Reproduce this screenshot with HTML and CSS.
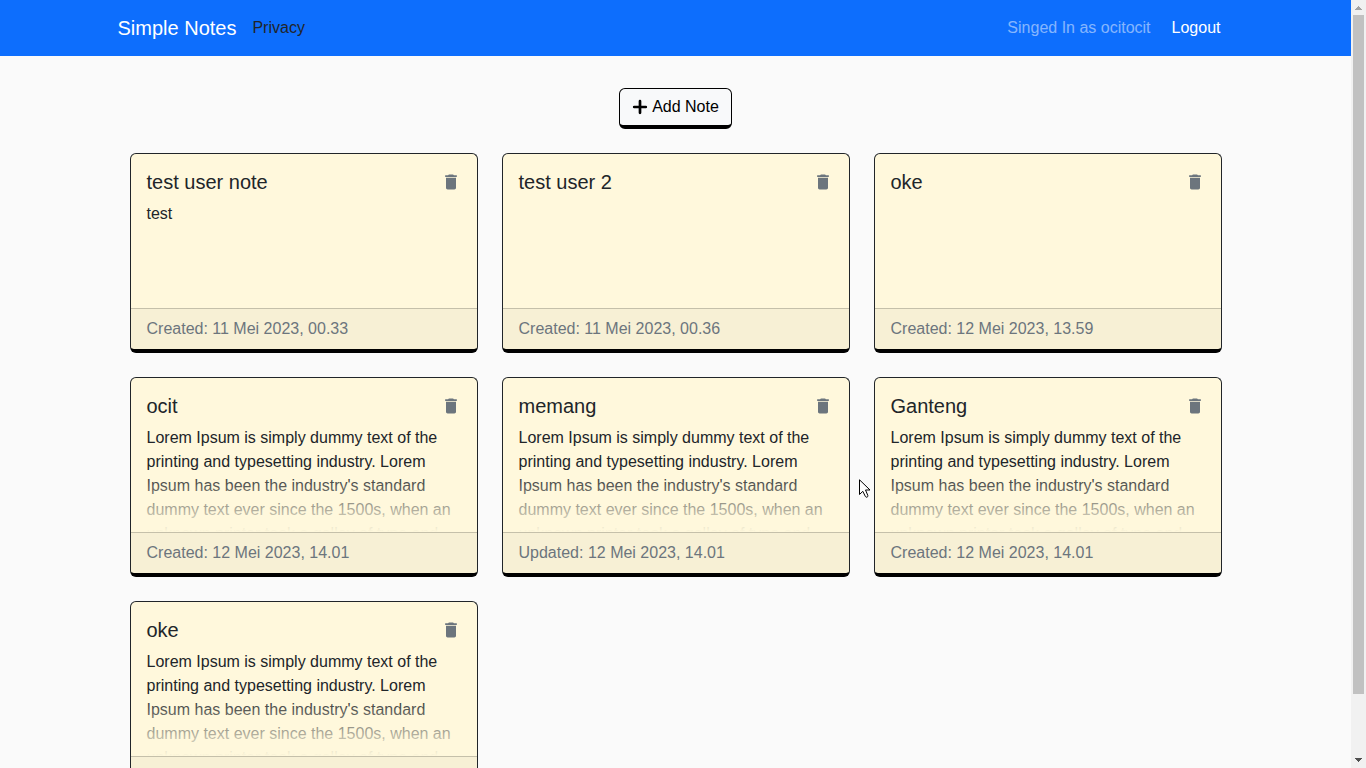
FILE: index.html
```html
<!DOCTYPE html>
<html lang="en">
<head>
<meta charset="utf-8">
<meta name="viewport" content="width=device-width, initial-scale=1">
<title>Simple Notes</title>
<link rel="stylesheet" href="styles.css">
</head>
<body>
<svg class="sprite" aria-hidden="true">
  <symbol id="trash" viewBox="0 0 24 24"><path d="M6 19c0 1.1.9 2 2 2h8c1.1 0 2-.9 2-2V7H6v12zM19 4h-3.500l-1-1h-5l-1 1H5v2h14V4z"/></symbol>
</svg>
<div class="page">
  <header class="navbar">
    <nav class="container navbar-inner">
      <a class="brand" href="#">Simple Notes</a>
      <a class="nav-link" href="#">Privacy</a>
      <span class="user">Singed In as ocitocit</span>
      <button class="logout" type="button">Logout</button>
    </nav>
  </header>
  <main class="container content">
    <button class="add-note" type="button">
      <svg class="plus" viewBox="0 0 16 16" aria-hidden="true"><path d="M8 2.200v11.600M2.200 8h11.600" stroke="currentColor" stroke-width="2.700" stroke-linecap="round"/></svg>
      Add Note
    </button>
    <div class="notes">
      <article class="note">
        <div class="note-body">
          <div class="note-head"><h5 class="note-title">test user note</h5><button class="delete" type="button" aria-label="Delete note"><svg class="icon"><use href="#trash"/></svg></button></div>
          <p class="note-text">test</p>
        </div>
        <footer class="note-footer">Created: 11 Mei 2023, 00.33</footer>
      </article>
      <article class="note">
        <div class="note-body">
          <div class="note-head"><h5 class="note-title">test user 2</h5><button class="delete" type="button" aria-label="Delete note"><svg class="icon"><use href="#trash"/></svg></button></div>
        </div>
        <footer class="note-footer">Created: 11 Mei 2023, 00.36</footer>
      </article>
      <article class="note">
        <div class="note-body">
          <div class="note-head"><h5 class="note-title">oke</h5><button class="delete" type="button" aria-label="Delete note"><svg class="icon"><use href="#trash"/></svg></button></div>
        </div>
        <footer class="note-footer">Created: 12 Mei 2023, 13.59</footer>
      </article>
      <article class="note">
        <div class="note-body">
          <div class="note-head"><h5 class="note-title">ocit</h5><button class="delete" type="button" aria-label="Delete note"><svg class="icon"><use href="#trash"/></svg></button></div>
          <p class="note-text">Lorem Ipsum is simply dummy text of the printing and typesetting industry. Lorem Ipsum has been the industry's standard dummy text ever since the 1500s, when an unknown printer took a galley of type and</p>
        </div>
        <footer class="note-footer">Created: 12 Mei 2023, 14.01</footer>
      </article>
      <article class="note">
        <div class="note-body">
          <div class="note-head"><h5 class="note-title">memang</h5><button class="delete" type="button" aria-label="Delete note"><svg class="icon"><use href="#trash"/></svg></button></div>
          <p class="note-text">Lorem Ipsum is simply dummy text of the printing and typesetting industry. Lorem Ipsum has been the industry's standard dummy text ever since the 1500s, when an unknown printer took a galley of type and</p>
        </div>
        <footer class="note-footer">Updated: 12 Mei 2023, 14.01</footer>
      </article>
      <article class="note">
        <div class="note-body">
          <div class="note-head"><h5 class="note-title">Ganteng</h5><button class="delete" type="button" aria-label="Delete note"><svg class="icon"><use href="#trash"/></svg></button></div>
          <p class="note-text">Lorem Ipsum is simply dummy text of the printing and typesetting industry. Lorem Ipsum has been the industry's standard dummy text ever since the 1500s, when an unknown printer took a galley of type and</p>
        </div>
        <footer class="note-footer">Created: 12 Mei 2023, 14.01</footer>
      </article>
      <article class="note">
        <div class="note-body">
          <div class="note-head"><h5 class="note-title">oke</h5><button class="delete" type="button" aria-label="Delete note"><svg class="icon"><use href="#trash"/></svg></button></div>
          <p class="note-text">Lorem Ipsum is simply dummy text of the printing and typesetting industry. Lorem Ipsum has been the industry's standard dummy text ever since the 1500s, when an unknown printer took a galley of type and</p>
        </div>
        <footer class="note-footer"></footer>
      </article>
    </div>
  </main>
</div>
<div class="scrollbar" aria-hidden="true">
  <svg class="arrow arrow-up" viewBox="0 0 15 15" shape-rendering="crispEdges"><path d="M7 6h1v1h1v1h1v1h1v1H4V9h1V8h1V7h1z"/></svg>
  <div class="track"><div class="thumb"></div></div>
  <svg class="arrow arrow-down" viewBox="0 0 15 15" shape-rendering="crispEdges"><path d="M4 5h7v1h-1v1H9v1H8v1H7V8H6V7H5V6H4z"/></svg>
</div>
<svg class="cursor" viewBox="0 0 12 20" aria-hidden="true"><path d="M.5.800v14.700l3.300-3.200 2.600 5.200q.6 1.100 1.700.6t.7-1.700L6.500 11H11z" fill="#fff" stroke="#000"/></svg>
</body>
</html>
```
FILE: styles.css
```css
*, *::before, *::after { box-sizing: border-box; }

body {
  margin: 0;
  display: flex;
  height: 100vh;
  overflow: hidden;
  background: #fafafa;
  color: #212529;
  font: 16px/24px "Liberation Sans", Arial, sans-serif;
}

button {
  font: inherit;
  cursor: pointer;
}

a { text-decoration: none; }

.sprite {
  position: absolute;
  width: 0;
  height: 0;
}

.page {
  flex: 1;
  min-width: 0;
  overflow: hidden;
}

.container {
  width: 100%;
  max-width: 1140px;
  margin: 0 auto;
  padding: 0 12px;
}

.navbar { background: #0d6efd; }

.navbar-inner {
  display: flex;
  align-items: center;
  gap: 16px;
  min-height: 56px;
}

.brand {
  color: #fff;
  font-size: 20px;
}

.nav-link { color: #212529; }

.user {
  margin-left: auto;
  color: rgba(255, 255, 255, 0.5);
}

.logout {
  padding: 6px 12px 6px 4px;
  border: 1px solid transparent;
  background: none;
  color: #fff;
}

.content {
  display: flex;
  flex-direction: column;
  align-items: center;
  gap: 24px;
  padding: 32px 24px 24px;
}

.add-note {
  display: flex;
  align-items: center;
  gap: 4px;
  padding: 6px 12px;
  border: 1px solid #000;
  border-bottom-width: 4px;
  border-radius: 6px;
  background: #f8f9fa;
  color: #000;
}

.plus {
  width: 16px;
  height: 16px;
}

.notes {
  display: grid;
  grid-template-columns: repeat(3, 1fr);
  gap: 24px;
  width: 100%;
}

.note {
  display: flex;
  flex-direction: column;
  height: 200px;
  overflow: hidden;
  border: 1px solid #212529;
  border-bottom: 4px solid #000;
  border-radius: 6px;
  background: cornsilk;
}

.note-body {
  position: relative;
  flex: 1;
  min-height: 0;
  overflow: hidden;
  padding: 16px;
}

.note-body::after {
  content: "";
  position: absolute;
  inset: 60% 0 0;
  background: linear-gradient(rgba(255, 248, 220, 0), cornsilk);
}

.note-head {
  display: flex;
  align-items: center;
  justify-content: space-between;
  margin-bottom: 8px;
}

.note-title {
  margin: 0;
  font-size: 20px;
  font-weight: 400;
  line-height: 24px;
}

.delete {
  display: flex;
  padding: 0;
  border: 0;
  background: none;
}

.icon {
  width: 20px;
  height: 20px;
  fill: #6c757d;
}

.note-text { margin: 0; }

.note-footer {
  min-height: 41px;
  padding: 8px 16px;
  border-top: 1px solid rgba(0, 0, 0, 0.2);
  background: rgba(0, 0, 0, 0.03);
  color: #6c757d;
}

.scrollbar {
  display: flex;
  flex-direction: column;
  width: 15px;
  background: #f1f1f1;
}

.arrow {
  width: 15px;
  height: 15px;
}

.arrow-up { fill: #a3a3a3; }

.arrow-down { fill: #505050; }

.track {
  flex: 1;
  padding: 0 2px;
}

.thumb {
  height: 92%;
  background: #c1c1c1;
}

.cursor {
  position: absolute;
  left: 859px;
  top: 479px;
  width: 12px;
  height: 20px;
}
```
